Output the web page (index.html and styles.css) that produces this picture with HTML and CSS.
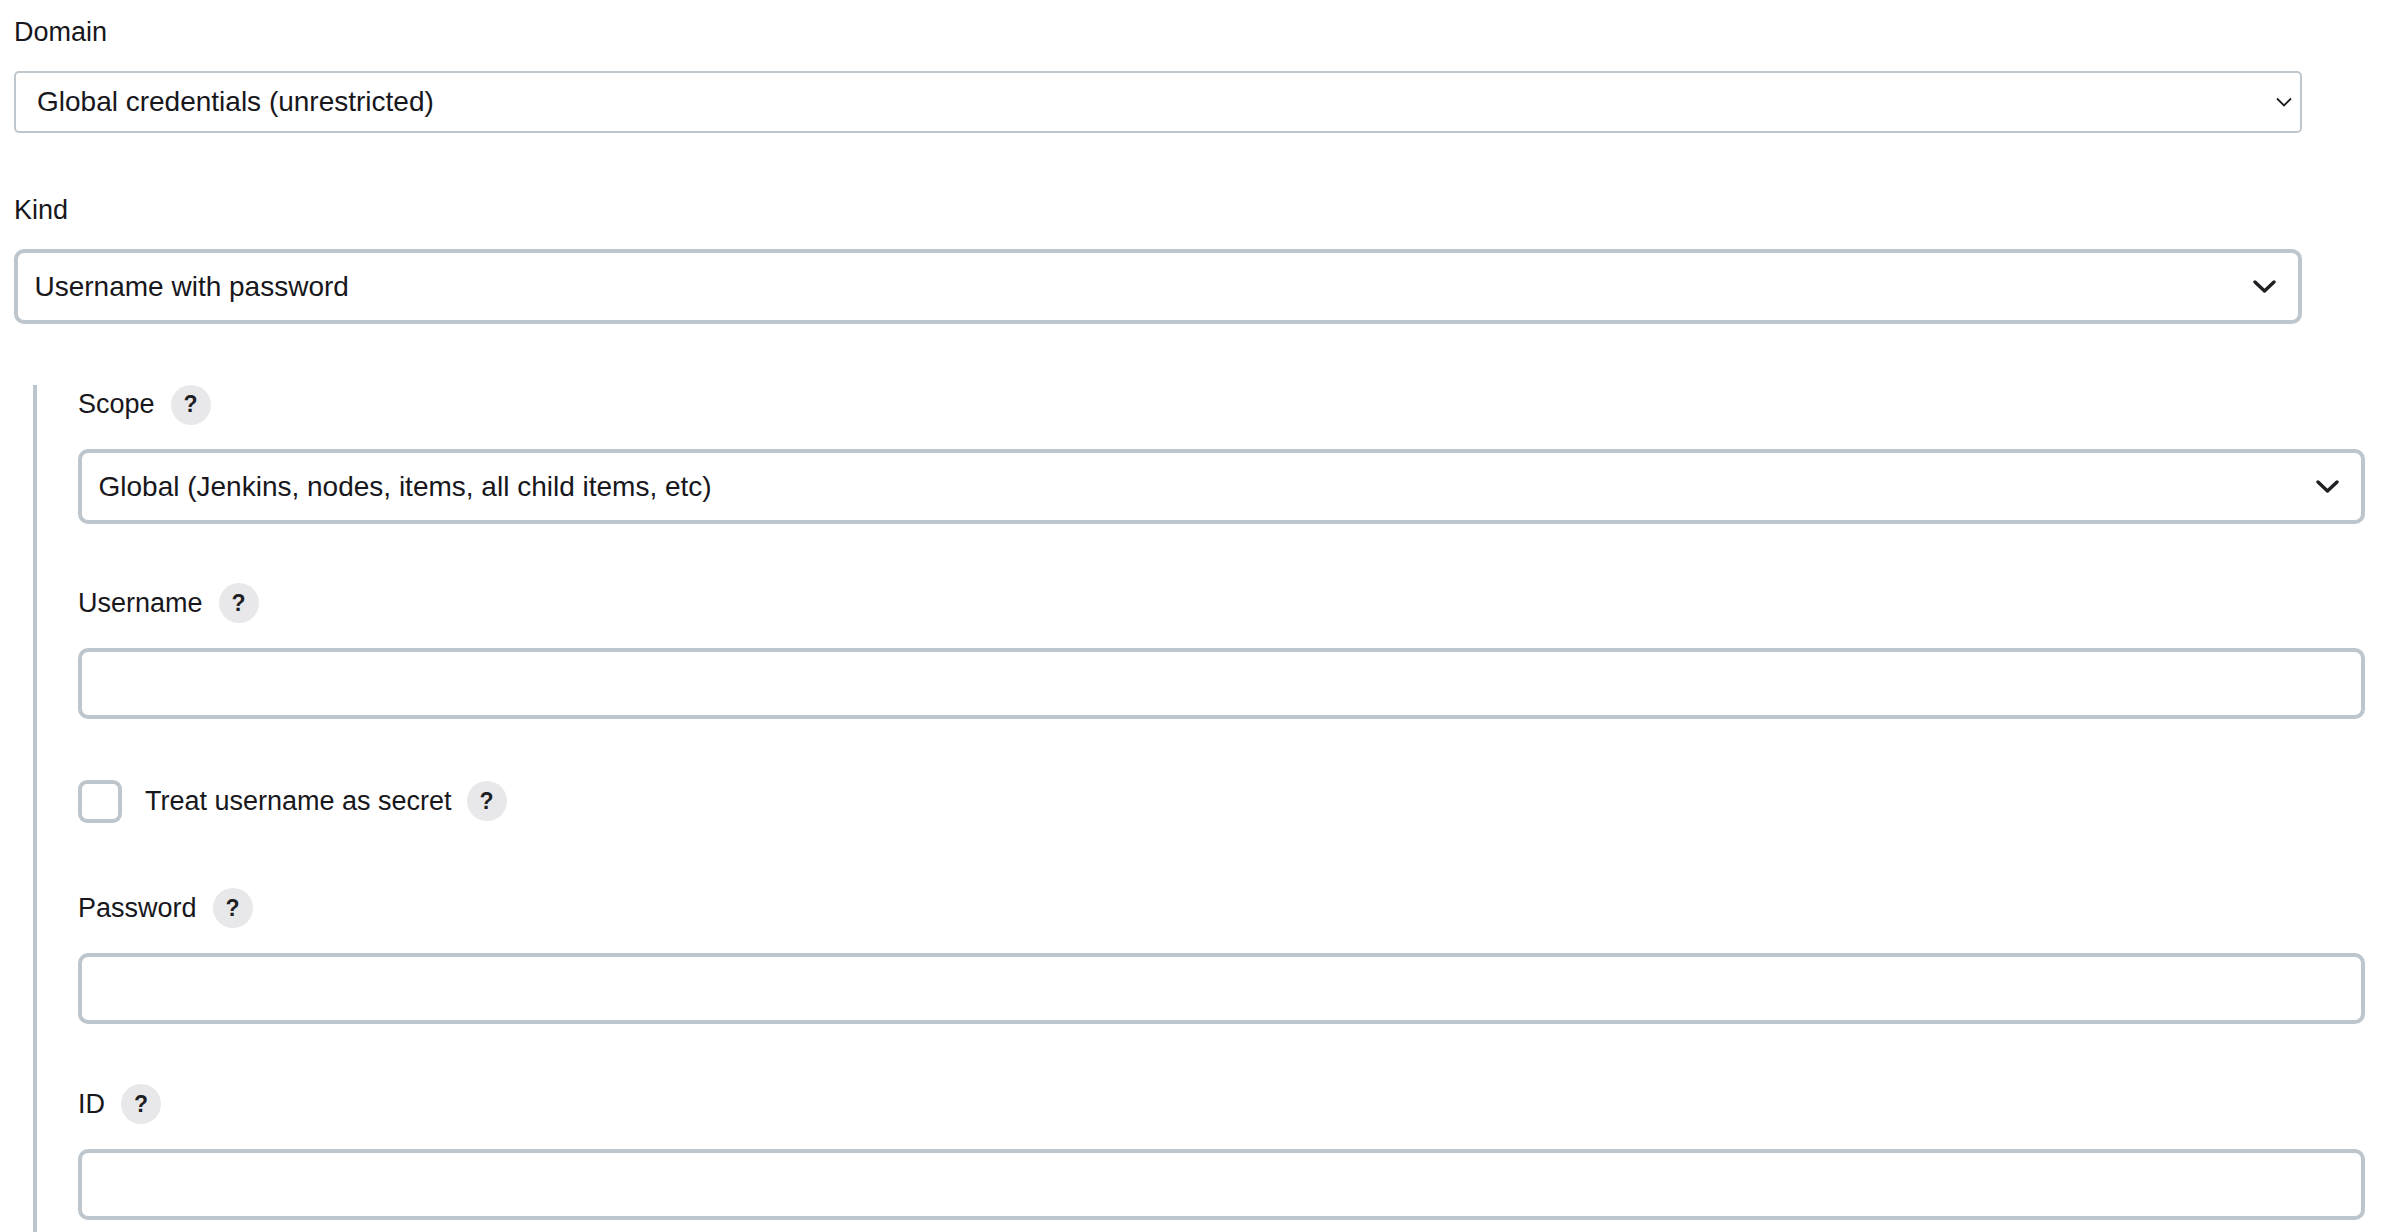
FILE: index.html
```html
<!DOCTYPE html>
<html lang="en">
<head>
<meta charset="utf-8">
<title>New credentials</title>
<link rel="stylesheet" href="styles.css">
</head>
<body>
<div class="form">
  <div class="field top domain">
    <div class="label-row plain">Domain</div>
    <div class="native-select">
      <span>Global credentials (unrestricted)</span>
      <svg class="chev-thin" width="16" height="10" viewBox="0 0 16 10"><polyline points="1,1.5 8,8.5 15,1.5" fill="none" stroke="#1f1f24" stroke-width="1.8"/></svg>
    </div>
  </div>
  <div class="field top kind">
    <div class="label-row plain">Kind</div>
    <div class="select">
      <span>Username with password</span>
      <svg class="chev" width="23" height="14" viewBox="0 0 23 14"><polyline points="2,2 11.5,11 21,2" fill="none" stroke="#1f1f24" stroke-width="3.4" stroke-linecap="round" stroke-linejoin="round"/></svg>
    </div>
  </div>
  <div class="nested">
    <div class="field scope">
      <div class="label-row"><span>Scope</span><span class="help">?</span></div>
      <div class="select">
        <span>Global (Jenkins, nodes, items, all child items, etc)</span>
        <svg class="chev" width="23" height="14" viewBox="0 0 23 14"><polyline points="2,2 11.5,11 21,2" fill="none" stroke="#1f1f24" stroke-width="3.4" stroke-linecap="round" stroke-linejoin="round"/></svg>
      </div>
    </div>
    <div class="field">
      <div class="label-row"><span>Username</span><span class="help">?</span></div>
      <div class="input"></div>
    </div>
    <div class="field check-field">
      <div class="check-row"><span class="checkbox"></span><span class="check-label">Treat username as secret</span><span class="help">?</span></div>
    </div>
    <div class="field">
      <div class="label-row"><span>Password</span><span class="help">?</span></div>
      <div class="input"></div>
    </div>
    <div class="field">
      <div class="label-row"><span>ID</span><span class="help">?</span></div>
      <div class="input"></div>
    </div>
  </div>
</div>
</body>
</html>
```
FILE: styles.css
```css
html, body {
  margin: 0;
  padding: 0;
  background: #ffffff;
}
body {
  font-family: "Liberation Sans", Arial, sans-serif;
  color: #17171c;
  overflow: hidden;
}
.form {
  width: 2288px;
  margin-left: 14px;
  padding-top: 12.5px;
}
.label-row {
  height: 39px;
  display: flex;
  align-items: center;
  gap: 16px;
  font-size: 27px;
  margin-bottom: 25px;
}
.label-row.plain {
  margin-bottom: 19.5px;
}
.field {
  margin-bottom: 61px;
}
.field.domain {
  margin-bottom: 57.5px;
}
.field.kind {
  margin-bottom: 61px;
}
.field.scope {
  margin-bottom: 59.5px;
}
.help {
  width: 40px;
  height: 40px;
  border-radius: 50%;
  background: #e8e8ea;
  display: flex;
  align-items: center;
  justify-content: center;
  font-weight: bold;
  font-size: 23px;
  color: #1f1f24;
}
.native-select {
  box-sizing: border-box;
  height: 62px;
  border: 2px solid #bfc7cd;
  border-radius: 5px;
  display: flex;
  align-items: center;
  justify-content: space-between;
  padding: 0 8px 0 21px;
  font-size: 28px;
}
.select {
  box-sizing: border-box;
  height: 75px;
  border: 4px solid #bdc6cc;
  border-radius: 10px;
  display: flex;
  align-items: center;
  justify-content: space-between;
  padding: 0 22px 0 16.5px;
  font-size: 28px;
}
.input {
  box-sizing: border-box;
  height: 71px;
  border: 4px solid #bdc6cc;
  border-radius: 10px;
}
.nested {
  margin-left: 19px;
  margin-right: -63px;
  border-left: 4px solid #bdc6cc;
  padding-left: 41px;
  padding-bottom: 40px;
}
.check-field {
  margin-bottom: 66px;
}
.check-row {
  height: 43px;
  display: flex;
  align-items: center;
  font-size: 27px;
}
.checkbox {
  box-sizing: border-box;
  width: 44px;
  height: 43px;
  border: 4px solid #bdc6cc;
  border-radius: 9px;
  margin-right: 23px;
}
.check-label {
  margin-right: 15px;
}
.chev, .chev-thin {
  flex: none;
}
```
